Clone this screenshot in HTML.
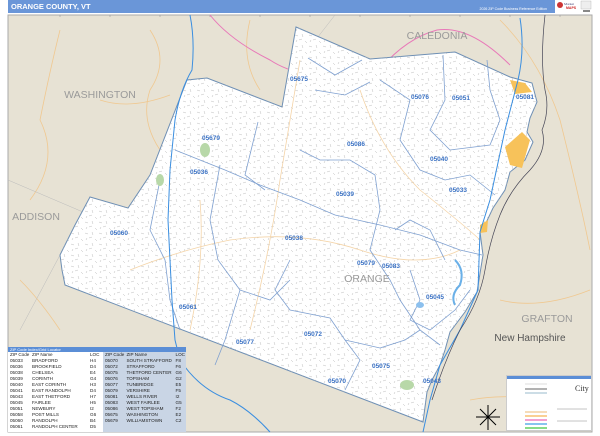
<!DOCTYPE html>
<html><head><meta charset="utf-8"><style>
html,body{margin:0;padding:0;background:#fff;}
body{width:600px;height:436px;position:relative;overflow:hidden;font-family:"Liberation Sans",sans-serif;}
.hdr{position:absolute;left:8px;top:0;width:547px;height:13px;background:#6a96d8;}
.hdr .t{position:absolute;left:3px;top:2px;color:#fff;font-weight:bold;font-size:7.5px;}
.hdr .s{position:absolute;right:8px;top:7px;color:#fff;font-size:3.5px;}
.logo{position:absolute;left:555px;top:0;width:37px;height:13px;background:#fff;}
.zt{position:absolute;top:5px;border-collapse:collapse;font-size:4.6px;line-height:6px;color:#222;}
.zt td{padding:0;white-space:nowrap;}
</style></head><body>
<div class="hdr"><span class="t">ORANGE COUNTY, VT</span><span class="s">2026 ZIP Code Business Reference Edition</span></div>
<div class="logo"><svg width="37" height="13"><circle cx="5" cy="5" r="3" fill="#c33"/><text x="9" y="5" font-size="3.5" fill="#447" font-family="Liberation Serif">Market</text><text x="11" y="9" font-size="3.5" fill="#c22" font-weight="bold">MAPS</text><rect x="26" y="1" width="10" height="8" fill="#eee" stroke="#999" stroke-width=".3"/><rect x="28" y="10" width="7" height="2" fill="#888"/></svg></div>
<svg style="position:absolute;left:0;top:0" width="600" height="436">
<defs><pattern id="tx" width="14" height="11" patternUnits="userSpaceOnUse">
<path d="M1 2 l3 1 M8 1 l1 3 M5 7 l3 -1 M11 8 l2 2 M2 9 l1 -2" stroke="#bbb" stroke-width=".5" fill="none"/></pattern></defs>
<rect x="8" y="15" width="584" height="417" fill="#e7e2d4" stroke="#aaa" stroke-width="1"/>
<g stroke="#999" stroke-width=".6">
<line x1="60" y1="15" x2="60" y2="17"/><line x1="110" y1="15" x2="110" y2="17"/><line x1="160" y1="15" x2="160" y2="17"/><line x1="210" y1="15" x2="210" y2="17"/><line x1="260" y1="15" x2="260" y2="17"/><line x1="310" y1="15" x2="310" y2="17"/><line x1="360" y1="15" x2="360" y2="17"/><line x1="410" y1="15" x2="410" y2="17"/><line x1="460" y1="15" x2="460" y2="17"/><line x1="510" y1="15" x2="510" y2="17"/><line x1="560" y1="15" x2="560" y2="17"/>
</g>
<g fill="none" stroke="#f0c890" stroke-width=".8">
<path d="M60 30 Q50 70 40 120 Q60 160 30 200"/><path d="M150 30 Q170 60 150 90 Q140 120 160 150"/>
<path d="M250 20 Q240 60 260 90"/><path d="M500 20 Q540 60 560 120 Q580 200 590 250"/>
<path d="M500 300 Q540 310 590 290"/><path d="M470 400 Q520 390 590 410"/>
<path d="M100 100 Q130 110 170 95"/><path d="M20 280 Q40 300 60 330"/>
</g>
<g fill="none" stroke="#bbb" stroke-width=".5">
<path d="M335 15 L300 60"/><path d="M8 180 L90 215"/><path d="M60 255 L20 330"/>
</g>
<path d="M210 15 Q230 40 270 60 Q300 80 370 82 Q400 40 437 30 Q470 25 510 65" fill="none" stroke="#e878b8" stroke-width="1"/>
<path id="cty" d="M296 27 L370 59 L455 52 L510 77 L532 83 L537 102 L530 118 L527 132 L533 142 L525 160 L510 172 L505 190 L493 208 L485 225 L480 232 L483 255 L477 292 L465 312 L450 332 L445 350 L440 365 L432 380 L427 392 L423 422 L65 285 L62 270 L60 255 L75 225 L90 197 L128 208 L150 175 L187 80 L207 78 L282 107 Z" fill="#fff" stroke="#6e8fb4" stroke-width="1"/>
<path d="M296 27 L370 59 L455 52 L510 77 L532 83 L537 102 L530 118 L527 132 L533 142 L525 160 L510 172 L505 190 L493 208 L485 225 L480 232 L483 255 L477 292 L465 312 L450 332 L445 350 L440 365 L432 380 L427 392 L423 422 L65 285 L62 270 L60 255 L75 225 L90 197 L128 208 L150 175 L187 80 L207 78 L282 107 Z" fill="url(#tx)"/>
<g fill="none" stroke="#f4d4a8" stroke-width=".8">
<path d="M130 270 Q180 250 230 240 Q300 230 360 250 Q420 270 460 250"/><path d="M300 60 Q290 120 280 180 Q270 250 250 330"/>
<path d="M360 90 Q380 150 420 190 Q470 230 480 240"/><path d="M200 200 Q205 260 190 330"/>
</g>
<path d="M510 80 L525 83 L532 92 L515 94 Z" fill="#f7c25a"/>
<path d="M505 147 L522 132 L530 140 L522 168 L510 165 Z" fill="#f7c25a"/>
<path d="M480 225 L488 220 L487 232 L480 233 Z" fill="#f7c25a"/>
<g fill="none" stroke="#7fa0d0" stroke-width=".8">
<path d="M175 150 L225 170 L260 185 L300 200 L335 215 L380 225 L420 235 L460 250 L482 255"/>
<path d="M258 122 L245 175 L265 190"/><path d="M308 58 L335 75 L362 60"/>
<path d="M315 90 L345 95 L370 82"/><path d="M380 80 L410 100 L400 140 L420 170 L445 180 L470 175 L495 195"/>
<path d="M443 55 L445 100 L430 130 L450 150 L490 145 L500 120 L490 90 L487 60"/>
<path d="M300 150 L320 160 L350 160 L375 175 L380 210 L370 250 L390 280 L400 300 L420 330 L440 345"/>
<path d="M220 165 L210 220 L218 260 L240 290 L225 340 L215 365"/>
<path d="M290 260 L275 290 L290 310 L330 318 L345 340 L360 360 L345 390"/>
<path d="M160 180 L150 230 L165 260 L170 300 L180 330"/>
<path d="M240 290 L270 300 L290 280"/><path d="M345 340 L380 348 L405 340 L420 330"/>
<path d="M410 270 L420 300 L410 320 L430 330 L455 310 L470 290"/>
<path d="M395 230 L410 220 L430 230 L445 260"/>
</g>
<g fill="none" stroke="#3a8ee0" stroke-width="1">
<path d="M190 15 Q195 40 192 70 Q180 90 175 120 L170 170 L168 220 L170 260 L172 300 L175 340 L180 360 Q200 390 230 400 Q250 410 270 432"/>
<path d="M520 18 Q525 50 518 80 L505 130 L490 200 L480 232 L478 290 L460 330 L440 365 L430 400 L423 432"/>
</g>
<path d="M545 15 Q540 60 545 90 Q550 110 542 130 Q548 150 530 170 Q510 190 500 215 Q490 240 485 270 Q480 300 460 330 Q445 360 432 400" fill="none" stroke="#445" stroke-width=".7"/>
<path d="M455 260 Q465 270 460 285 Q450 295 455 305" fill="none" stroke="#6ab0e8" stroke-width="2"/>
<ellipse cx="420" cy="305" rx="4" ry="3" fill="#8cc0ee"/>
<g fill="#b8d8a8"><ellipse cx="205" cy="150" rx="5" ry="7"/><ellipse cx="407" cy="385" rx="7" ry="5"/><ellipse cx="160" cy="180" rx="4" ry="6"/></g>
<g font-family="Liberation Sans" font-size="10.5" fill="#9a9a9a" text-anchor="middle">
<text x="100" y="98">WASHINGTON</text><text x="437" y="39">CALEDONIA</text><text x="36" y="220">ADDISON</text><text x="547" y="322">GRAFTON</text><text x="367" y="282">ORANGE</text>
</g>
<text x="530" y="341" font-size="10" fill="#555" text-anchor="middle" font-family="Liberation Sans">New Hampshire</text>
<g font-family="Liberation Sans" font-size="6.5" font-weight="bold" fill="#3b72c4" text-anchor="middle">
<text x="299" y="81">05675</text><text x="420" y="99">05076</text><text x="461" y="100">05051</text><text x="525" y="99">05081</text>
<text x="211" y="140">05679</text><text x="356" y="146">05086</text><text x="439" y="161">05040</text><text x="199" y="174">05036</text>
<text x="345" y="196">05039</text><text x="458" y="192">05033</text><text x="119" y="235">05060</text><text x="294" y="240">05038</text>
<text x="366" y="265">05079</text><text x="391" y="268">05083</text><text x="435" y="299">05045</text><text x="188" y="309">05061</text>
<text x="245" y="344">05077</text><text x="313" y="336">05072</text><text x="381" y="368">05075</text><text x="337" y="383">05070</text><text x="432" y="383">05043</text>
</g>
<g stroke="#000" stroke-width="1"><line x1="488" y1="405" x2="488" y2="430"/><line x1="476" y1="417" x2="500" y2="417"/><line x1="480" y1="409" x2="496" y2="425"/><line x1="496" y1="409" x2="480" y2="425"/></g>
</svg>
<div style="position:absolute;left:8px;top:347px;width:178px;height:85px;background:#fff;overflow:hidden">
<div style="background:#5b8ed6;color:#fff;height:5px;font-size:4px;line-height:5px;padding-left:2px">ZIP Code Index/Grid Locator</div>
<div style="position:absolute;left:95px;top:5px;width:83px;height:80px;background:#c9d5e5"></div>
<table class="zt" style="left:2px;width:90px"><colgroup><col style="width:22px"><col style="width:58px"><col></colgroup>
<tr><td>ZIP Code</td><td>ZIP Name</td><td>LOC</td></tr>
<tr><td>05033</td><td>BRADFORD</td><td>H4</td></tr><tr><td>05036</td><td>BROOKFIELD</td><td>D4</td></tr><tr><td>05038</td><td>CHELSEA</td><td>E4</td></tr><tr><td>05039</td><td>CORINTH</td><td>G4</td></tr><tr><td>05040</td><td>EAST CORINTH</td><td>H3</td></tr><tr><td>05041</td><td>EAST RANDOLPH</td><td>D4</td></tr><tr><td>05043</td><td>EAST THETFORD</td><td>H7</td></tr><tr><td>05045</td><td>FAIRLEE</td><td>H5</td></tr><tr><td>05051</td><td>NEWBURY</td><td>I2</td></tr><tr><td>05058</td><td>POST MILLS</td><td>G6</td></tr><tr><td>05060</td><td>RANDOLPH</td><td>B4</td></tr><tr><td>05061</td><td>RANDOLPH CENTER</td><td>D5</td></tr>
</table>
<table class="zt" style="left:97px;width:80px"><colgroup><col style="width:22px"><col style="width:50px"><col></colgroup>
<tr><td>ZIP Code</td><td>ZIP Name</td><td>LOC</td></tr>
<tr><td>05070</td><td>SOUTH STRAFFORD</td><td>F8</td></tr><tr><td>05072</td><td>STRAFFORD</td><td>F6</td></tr><tr><td>05075</td><td>THETFORD CENTER</td><td>G6</td></tr><tr><td>05076</td><td>TOPSHAM</td><td>G2</td></tr><tr><td>05077</td><td>TUNBRIDGE</td><td>E5</td></tr><tr><td>05079</td><td>VERSHIRE</td><td>F5</td></tr><tr><td>05081</td><td>WELLS RIVER</td><td>I2</td></tr><tr><td>05083</td><td>WEST FAIRLEE</td><td>G5</td></tr><tr><td>05086</td><td>WEST TOPSHAM</td><td>F2</td></tr><tr><td>05675</td><td>WASHINGTON</td><td>E2</td></tr><tr><td>05679</td><td>WILLIAMSTOWN</td><td>C2</td></tr>
</table>
</div>
<div style="position:absolute;left:506px;top:375px;width:86px;height:56px;background:#fff;border:1px solid #ccc;box-sizing:border-box">
<div style="background:#5b8ed6;height:3px"></div>
<svg width="86" height="52" style="display:block">
<g stroke-width="1"><line x1="18" y1="5" x2="40" y2="5" stroke="#ddd"/><line x1="18" y1="10" x2="40" y2="10" stroke="#999" stroke-width="1.5"/><line x1="18" y1="14" x2="40" y2="14" stroke="#9bc"/>
<line x1="18" y1="33" x2="40" y2="33" stroke="#f4d0a0" stroke-width="1.5"/><line x1="18" y1="37" x2="40" y2="37" stroke="#f8c070" stroke-width="1.5"/><line x1="18" y1="41" x2="40" y2="41" stroke="#f080c0" stroke-width="1.5"/><line x1="18" y1="45" x2="40" y2="45" stroke="#60b0e8" stroke-width="1.5"/><line x1="18" y1="49" x2="40" y2="49" stroke="#60d060" stroke-width="1.5"/></g>
<text x="68" y="12" font-size="8" font-family="Liberation Serif" fill="#333">City</text>
<line x1="50" y1="30" x2="80" y2="30" stroke="#888" stroke-width=".5"/><line x1="50" y1="42" x2="80" y2="42" stroke="#888" stroke-width=".5"/>
</svg></div>
</body></html>
